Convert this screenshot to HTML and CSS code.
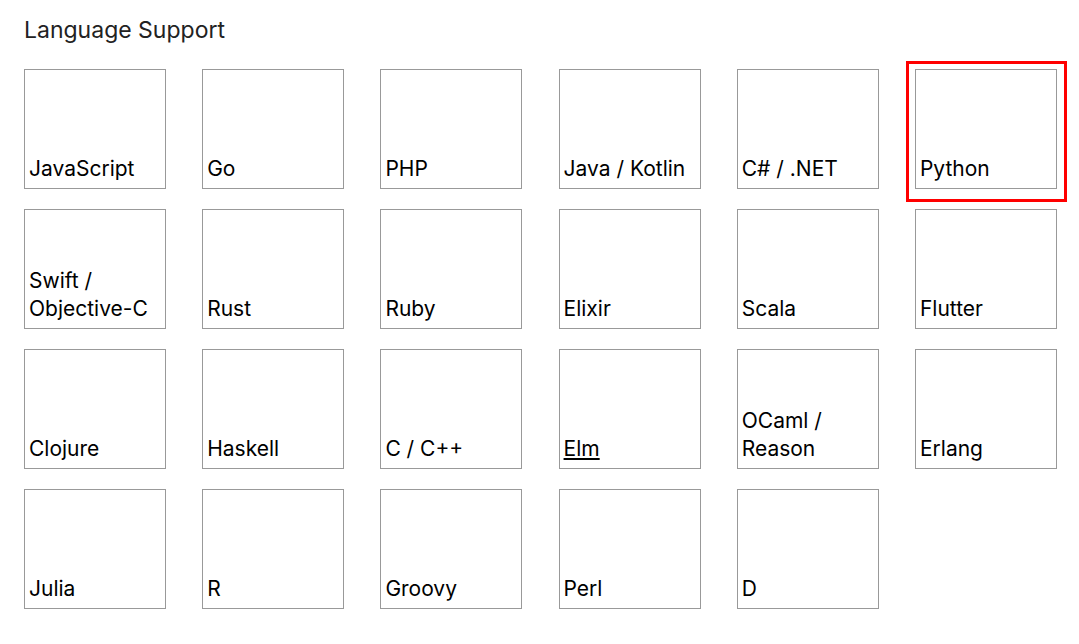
FILE: index.html
```html
<!DOCTYPE html>
<html lang="en">
  <head>
    <meta charset="UTF-8" />
    <meta name="viewport" content="width=device-width, initial-scale=1.0" />
    <title>Language Support</title>
    <link rel="stylesheet" href="styles.css">
  </head>
  <body>
    <!-- language list -->
    <h2 class="title">Language Support</h2>
    <div class="lang-grid">
      <div class="lang-card"><span>JavaScript</span></div>
      <div class="lang-card"><span>Go</span></div>
      <div class="lang-card"><span>PHP</span></div>
      <div class="lang-card"><span>Java / Kotlin</span></div>
      <div class="lang-card"><span>C# / .NET</span></div>
      <div class="lang-card selected"><span>Python</span></div>

      <div class="lang-card"><span>Swift / Objective-C</span></div>
      <div class="lang-card"><span>Rust</span></div>
      <div class="lang-card"><span>Ruby</span></div>
      <div class="lang-card"><span>Elixir</span></div>
      <div class="lang-card"><span>Scala</span></div>
      <div class="lang-card"><span>Flutter</span></div>

      <div class="lang-card"><span>Clojure</span></div>
      <div class="lang-card"><span>Haskell</span></div>
      <div class="lang-card"><span>C / C++</span></div>
      <div class="lang-card"><a href="#">Elm</a></div>
      <div class="lang-card"><span>OCaml / Reason</span></div>
      <div class="lang-card"><span>Erlang</span></div>

      <div class="lang-card"><span>Julia</span></div>
      <div class="lang-card"><span>R</span></div>
      <div class="lang-card"><span>Groovy</span></div>
      <div class="lang-card"><span>Perl</span></div>
      <div class="lang-card"><span>D</span></div>
    </div>
  </body>
</html>
```

FILE: styles.css
```css
/* layout */
body {
  font-family: Inter, "Noto Sans", sans-serif;
  margin: 0;
  padding: 13px 24px;
  color: #000;
  background: #fff;
}

.title {
  font-size: 23px;
  font-weight: 400;
  color: #222;
  margin: 0 0 22px;
  line-height: 34px;
}

.lang-grid {
  display: grid;
  grid-template-columns: repeat(6, 142px);
  justify-content: space-between;
  row-gap: 20px;
  width: 1033px;
}

.lang-card {
  position: relative;
  height: 120px;
  box-sizing: border-box;
  border: 1px solid #999;
  padding: 5px 4px 5px;
  display: flex;
  flex-direction: column;
  justify-content: flex-end;
  font-size: 21px;
  line-height: 28px;
}

.lang-card a {
  color: #000;
  text-decoration: underline;
}

/* highlighted item */
.lang-card.selected::after {
  content: "";
  position: absolute;
  top: -9px;
  left: -10px;
  right: -11px;
  bottom: -14px;
  border: 3px solid #f00;
}
```
